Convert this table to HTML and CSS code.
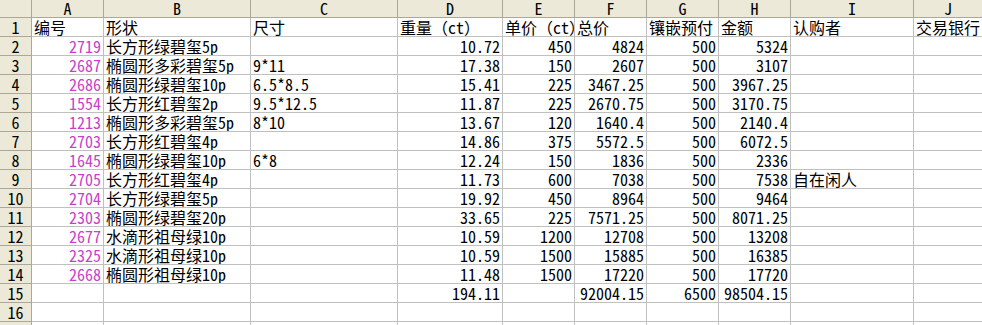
FILE: index.html
```html
<!DOCTYPE html>
<html lang="zh-CN">
<head>
<meta charset="utf-8">
<title>Sheet</title>
<link rel="stylesheet" href="styles.css">
</head>
<body>
<div class="sheet">
  <div class="corner"></div>
  <div class="ch">A</div><div class="ch">B</div><div class="ch">C</div><div class="ch">D</div><div class="ch">E</div><div class="ch">F</div><div class="ch">G</div><div class="ch">H</div><div class="ch">I</div><div class="ch">J</div>

  <div class="rh">1</div>
  <div class="c">编号</div><div class="c">形状</div><div class="c">尺寸</div><div class="c">重量（ct）</div><div class="c">单价（ct）</div><div class="c">总价</div><div class="c">镶嵌预付</div><div class="c">金额</div><div class="c">认购者</div><div class="c">交易银行</div>

  <div class="rh">2</div>
  <div class="c n id">2719</div><div class="c">长方形绿碧玺5p</div><div class="c"></div><div class="c n">10.72</div><div class="c n">450</div><div class="c n">4824</div><div class="c n">500</div><div class="c n">5324</div><div class="c"></div><div class="c"></div>

  <div class="rh">3</div>
  <div class="c n id">2687</div><div class="c">椭圆形多彩碧玺5p</div><div class="c">9*11</div><div class="c n">17.38</div><div class="c n">150</div><div class="c n">2607</div><div class="c n">500</div><div class="c n">3107</div><div class="c"></div><div class="c"></div>

  <div class="rh">4</div>
  <div class="c n id">2686</div><div class="c">椭圆形绿碧玺10p</div><div class="c">6.5*8.5</div><div class="c n">15.41</div><div class="c n">225</div><div class="c n">3467.25</div><div class="c n">500</div><div class="c n">3967.25</div><div class="c"></div><div class="c"></div>

  <div class="rh">5</div>
  <div class="c n id">1554</div><div class="c">长方形红碧玺2p</div><div class="c">9.5*12.5</div><div class="c n">11.87</div><div class="c n">225</div><div class="c n">2670.75</div><div class="c n">500</div><div class="c n">3170.75</div><div class="c"></div><div class="c"></div>

  <div class="rh">6</div>
  <div class="c n id">1213</div><div class="c">椭圆形多彩碧玺5p</div><div class="c">8*10</div><div class="c n">13.67</div><div class="c n">120</div><div class="c n">1640.4</div><div class="c n">500</div><div class="c n">2140.4</div><div class="c"></div><div class="c"></div>

  <div class="rh">7</div>
  <div class="c n id">2703</div><div class="c">长方形红碧玺4p</div><div class="c"></div><div class="c n">14.86</div><div class="c n">375</div><div class="c n">5572.5</div><div class="c n">500</div><div class="c n">6072.5</div><div class="c"></div><div class="c"></div>

  <div class="rh">8</div>
  <div class="c n id">1645</div><div class="c">椭圆形绿碧玺10p</div><div class="c">6*8</div><div class="c n">12.24</div><div class="c n">150</div><div class="c n">1836</div><div class="c n">500</div><div class="c n">2336</div><div class="c"></div><div class="c"></div>

  <div class="rh">9</div>
  <div class="c n id">2705</div><div class="c">长方形红碧玺4p</div><div class="c"></div><div class="c n">11.73</div><div class="c n">600</div><div class="c n">7038</div><div class="c n">500</div><div class="c n">7538</div><div class="c">自在闲人</div><div class="c"></div>

  <div class="rh">10</div>
  <div class="c n id">2704</div><div class="c">长方形绿碧玺5p</div><div class="c"></div><div class="c n">19.92</div><div class="c n">450</div><div class="c n">8964</div><div class="c n">500</div><div class="c n">9464</div><div class="c"></div><div class="c"></div>

  <div class="rh">11</div>
  <div class="c n id">2303</div><div class="c">椭圆形绿碧玺20p</div><div class="c"></div><div class="c n">33.65</div><div class="c n">225</div><div class="c n">7571.25</div><div class="c n">500</div><div class="c n">8071.25</div><div class="c"></div><div class="c"></div>

  <div class="rh">12</div>
  <div class="c n id">2677</div><div class="c">水滴形祖母绿10p</div><div class="c"></div><div class="c n">10.59</div><div class="c n">1200</div><div class="c n">12708</div><div class="c n">500</div><div class="c n">13208</div><div class="c"></div><div class="c"></div>

  <div class="rh">13</div>
  <div class="c n id">2325</div><div class="c">水滴形祖母绿10p</div><div class="c"></div><div class="c n">10.59</div><div class="c n">1500</div><div class="c n">15885</div><div class="c n">500</div><div class="c n">16385</div><div class="c"></div><div class="c"></div>

  <div class="rh">14</div>
  <div class="c n id">2668</div><div class="c">椭圆形祖母绿10p</div><div class="c"></div><div class="c n">11.48</div><div class="c n">1500</div><div class="c n">17220</div><div class="c n">500</div><div class="c n">17720</div><div class="c"></div><div class="c"></div>

  <div class="rh">15</div>
  <div class="c"></div><div class="c"></div><div class="c"></div><div class="c n">194.11</div><div class="c"></div><div class="c n">92004.15</div><div class="c n">6500</div><div class="c n">98504.15</div><div class="c"></div><div class="c"></div>

  <div class="rh">16</div>
  <div class="c"></div><div class="c"></div><div class="c"></div><div class="c"></div><div class="c"></div><div class="c"></div><div class="c"></div><div class="c"></div><div class="c"></div><div class="c"></div>

  <div class="rh"></div>
  <div class="c"></div><div class="c"></div><div class="c"></div><div class="c"></div><div class="c"></div><div class="c"></div><div class="c"></div><div class="c"></div><div class="c"></div><div class="c"></div>
</div>
</body>
</html>
```

FILE: styles.css
```css
html, body {
  margin: 0;
  padding: 0;
  background: #ffffff;
  overflow: hidden;
}

.sheet {
  display: grid;
  grid-template-columns: 32px 72px 147px 147px 105px 72px 72px 72px 72px 123px 68px;
  grid-template-rows: 18px repeat(16, 19px) 4px;
  width: 982px;
  font-family: "Noto Sans Mono CJK SC", "Noto Sans CJK SC", sans-serif;
  font-size: 16px;
  font-weight: 300;
  line-height: 18px;
  color: #000000;
}

.sheet > div {
  box-sizing: border-box;
  white-space: nowrap;
}

.sheet > :nth-child(11n) {
  border-right: 0;
}

.corner {
  background: #ece9d8;
  border-right: 1px solid #aca899;
  border-bottom: 1px solid #aca899;
}

.ch {
  background: #ece9d8;
  border-right: 1px solid #aca899;
  border-bottom: 1px solid #aca899;
  text-align: center;
  line-height: 17px;
}

.rh {
  background: #ece9d8;
  border-right: 1px solid #aca899;
  border-bottom: 1px solid #aca899;
  text-align: center;
}

.c {
  border-right: 1px solid #c0c0c0;
  border-bottom: 1px solid #c0c0c0;
  padding: 0 2px;
  overflow: hidden;
}

.n {
  text-align: right;
}

.id {
  color: #c83fc8;
}
```
